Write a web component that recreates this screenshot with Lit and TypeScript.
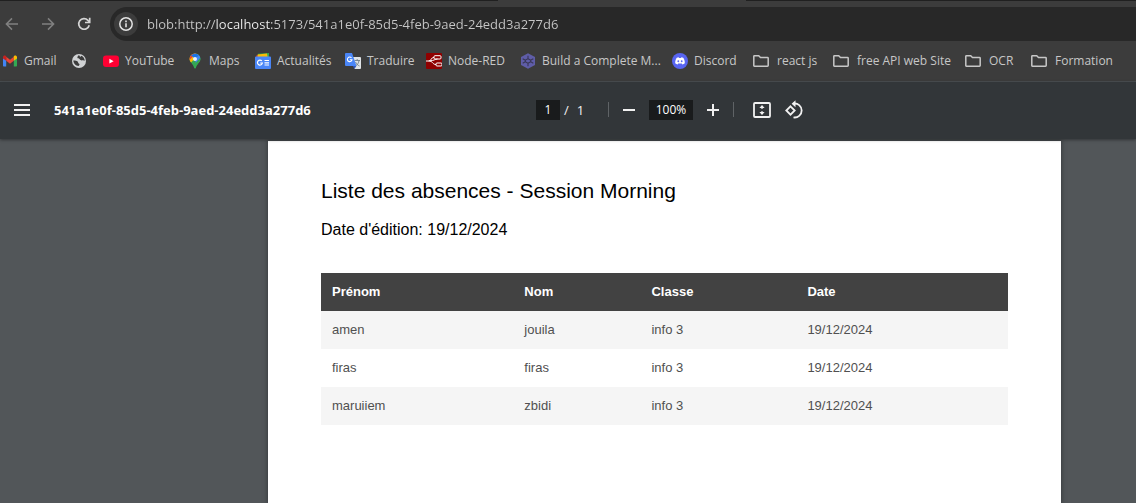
import { LitElement, html, css, TemplateResult } from "lit";
import { customElement, property } from "lit/decorators.js";

const icons: Record<string, TemplateResult> = {
  back: html`<svg width="16" height="16" viewBox="0 0 16 16" fill="none" stroke="currentColor" stroke-width="1.5"><path d="M14 8H2.6M8 2.4 2.4 8 8 13.6" /></svg>`,
  forward: html`<svg width="16" height="16" viewBox="0 0 16 16" fill="none" stroke="currentColor" stroke-width="1.5"><path d="M2 8h11.400M8 2.400 13.600 8 8 13.600" /></svg>`,
  reload: html`<svg width="16" height="16" viewBox="0 0 16 16" fill="none" stroke="currentColor" stroke-width="1.700"><path d="M13.200 9.200A5.300 5.300 0 1 1 11.900 4.300L13.500 6" /><path d="M13.700 1.800v4.700H9" /></svg>`,
  info: html`<svg width="16" height="16" viewBox="0 0 16 16"><circle cx="8" cy="8" r="6.200" fill="none" stroke="currentColor" stroke-width="1.500" /><path d="M7.200 7.200h1.600v4H7.200zM7.200 4.600h1.600v1.600H7.200z" fill="currentColor" /></svg>`,
  gmail: html`<svg width="16" height="16" viewBox="0 0 16 16"><path d="M1 4.200V12.500c0 .6.400 1 1 1h2.200V6.600z" fill="#4285f4" /><path d="M15 4.200V12.500c0 .6-.4 1-1 1h-2.200V6.600z" fill="#34a853" /><path d="M4.200 3.800 8 6.700l3.800-2.900v4L8 10.700 4.200 7.800z" fill="#ea4335" /><path d="M1 4.300c0-1.600 1.700-2.300 2.900-1.400l.3.200v4.700L1 5.400z" fill="#c5221f" /><path d="M15 4.300c0-1.600-1.700-2.300-2.900-1.400l-.3.200v4.700L15 5.400z" fill="#fbbc04" /></svg>`,
  globe: html`<svg width="16" height="16" viewBox="0 0 16 16"><circle cx="8" cy="8" r="7" fill="#d0d2d4" /><path d="M2.300 7.600c1.500 0 3.200-.1 4.300.9.900.8.200 1.600 1.300 2.100 1 .5.600 1.700-.3 2.500C4.700 12.900 2.500 10.600 2.300 7.600zM7 2.500c.2.900-.8 1.300-.6 2.200.2.800 1.600.5 2.100 1.300.6 1 1.700 1.600 2.800 1.300.9-.3 1.600-.1 2.400.5A5.700 5.700 0 0 0 10.200 2.700C10 4 8.800 4 8.500 2.400z" fill="#3c3c3c" /></svg>`,
  youtube: html`<svg width="16" height="16" viewBox="0 0 16 16"><rect y="2.500" width="16" height="11.500" rx="3" fill="#f03" /><path d="M6.400 5.800v4.800l4.200-2.400z" fill="#fff" /></svg>`,
  maps: html`<svg width="16" height="16" viewBox="0 0 16 16"><defs><clipPath id="pin"><path d="M8 .5a5.400 5.400 0 0 0-5.400 5.400c0 3 2.600 4.300 3.900 6.900.4.800.7 2.700 1.500 2.700s1.100-1.900 1.500-2.700c1.300-2.600 3.900-3.900 3.900-6.900A5.400 5.400 0 0 0 8 .5z" /></clipPath></defs><g clip-path="url(#pin)"><path d="M0 0h16v16H0z" fill="#34a853" /><path d="M0 14 13 0H0z" fill="#fbbc04" /><path d="M0 10 9 0H0z" fill="#ea4335" /><path d="M4 2.200 8 6 13.500 1 8 0z" fill="#1a73e8" /><path d="M8 6 14 0v5L9 11z" fill="#4285f4" /><path d="m14 4-9 10 4 2 6-6z" fill="#34a853" /></g><circle cx="8" cy="5.900" r="2" fill="#e8f0fe" /></svg>`,
  news: html`<svg width="16" height="16" viewBox="0 0 16 16"><path d="M1.500 2h7v5h-7z" fill="#ea4335" transform="rotate(-8 5 4)" /><path d="M3 .8 14 0v6H3z" fill="#34a853" /><path d="M2.500 1.500 12 .6 13 6H3z" fill="#fbbc04" /><path d="M0 4.500A1 1 0 0 1 1 3.500h14a1 1 0 0 1 1 1V15a1 1 0 0 1-1 1H1a1 1 0 0 1-1-1z" fill="#4a86f7" /><path d="M6.900 8A2.500 2.500 0 1 0 7.400 10H5.200M9.500 7.500H14M9.500 9.800h4.500M9.500 12H14" fill="none" stroke="#fff" stroke-width="1.200" /></svg>`,
  translate: html`<svg width="16" height="16" viewBox="0 0 16 16"><path d="M7 4h8a1 1 0 0 1 1 1v10a1 1 0 0 1-1 1H9.500z" fill="#dfe3e6" /><path d="M9.500 7.500H15M12.200 6v1.500M10.500 13c2-1.300 3.200-3 3.500-5.500M10.500 9c1 2 2.300 3.200 4 4" fill="none" stroke="#708088" stroke-width=".9" /><path d="M7.800 13h3.500l-1.800 3z" fill="#3257b5" /><path d="M1 0h6l4.500 13H1a1 1 0 0 1-1-1V1a1 1 0 0 1 1-1z" fill="#4a86f7" /><path d="M6.500 4.900A2.300 2.300 0 1 0 7 6.700H4.800" fill="none" stroke="#fff" stroke-width="1.100" /></svg>`,
  nodered: html`<svg width="16" height="16" viewBox="0 0 16 16"><rect width="16" height="16" rx="1" fill="#8f0000" /><rect x="8" y="2.700" width="7" height="3.300" rx="1" fill="none" stroke="#fff" /><rect x="10" y="10" width="6" height="3" rx="1" fill="none" stroke="#fff" /><path d="M8 4.300C5 4.300 5.500 8 2.500 8H0M2.500 8c5 0 3.500 3.500 7.500 3.500M4 7.800c4 0 5-1.800 7.500-1.800" fill="none" stroke="#fff" /></svg>`,
  hexagon: html`<svg width="16" height="16" viewBox="0 0 16 16"><path d="m8 .2 7 3.900v7.800l-7 3.900-7-3.900V4.100z" fill="#5f5da8" /><path d="M8 2.700v3L5.300 7.200 2.700 5.700M13.300 5.700 10.700 7.200 8 5.700M2.700 10.300l2.600-1.500V7.200M8 13.300v-3L5.300 8.800M13.300 10.300l-2.600-1.500V7.200M8 10.300l2.700-1.500" fill="none" stroke="#383655" stroke-width="1.100" /></svg>`,
  discord: html`<svg width="16" height="16" viewBox="0 0 16 16"><circle cx="8" cy="8" r="8" fill="#5865f2" /><path d="M5.600 4.500 6.700 4.300l.3.600h2l.3-.6 1.100.2c.7.200 1 .5 1.200.8.900 1.500 1.300 3.200 1.200 5-.7.600-1.500 1-2.400 1.200l-.6-1H6.200l-.6 1c-.9-.2-1.700-.6-2.400-1.200-.1-1.800.3-3.500 1.200-5 .2-.3.500-.6 1.200-.8z" fill="#fff" /><ellipse cx="6.300" cy="8.200" rx=".9" ry="1" fill="#5865f2" /><ellipse cx="9.700" cy="8.200" rx=".9" ry="1" fill="#5865f2" /></svg>`,
  folder: html`<svg width="20" height="16" viewBox="-1 0 20 16" fill="none" stroke="#c7c7c7" stroke-width="1.500"><path d="M1.800 3.300c0-.4.200-.6.600-.6h4.300l1.800 1.800h7c.4 0 .7.300.7.700v7.400c0 .4-.3.700-.7.700H2.400c-.4 0-.6-.3-.6-.7z" /></svg>`,
  menu: html`<svg width="16" height="12" viewBox="0 0 16 12"><path d="M0 0h16v2H0zM0 5h16v2H0zM0 10h16v2H0z" fill="currentColor" /></svg>`,
  minus: html`<svg width="12" height="12" viewBox="0 0 12 12"><path d="M0 5h12v2H0z" fill="currentColor" /></svg>`,
  plus: html`<svg width="12" height="12" viewBox="0 0 12 12"><path d="M0 5h12v2H0zM5 0h2v12H5z" fill="currentColor" /></svg>`,
  fit: html`<svg width="20" height="18" viewBox="0 0 20 18"><rect x="2" y="2" width="16" height="14" rx="1" fill="none" stroke="currentColor" stroke-width="1.800" /><path d="m10 4 2.600 3H7.400zM10 14l-2.600-3h5.200zM9.200 6.500h1.600v1.300H9.200zM9.200 10.200h1.600v1.300H9.200z" fill="currentColor" /></svg>`,
  rotate: html`<svg width="20" height="20" viewBox="0 0 20 20" fill="none" stroke="currentColor" stroke-width="1.800"><path d="m6.500 6.300 4.200 4.200-4.200 4.200-4.200-4.200z" /><path d="M9.500 3.600a7 7 0 1 1 0 13.800" /><path d="M11.500.2 7.600 3.700l3.900 3.500z" fill="currentColor" stroke="none" /></svg>`,
};

interface Bookmark {
  icon: string;
  label: string;
}

const bookmarks: Bookmark[] = [
  { icon: "gmail", label: "Gmail" },
  { icon: "globe", label: "" },
  { icon: "youtube", label: "YouTube" },
  { icon: "maps", label: "Maps" },
  { icon: "news", label: "Actualités" },
  { icon: "translate", label: "Traduire" },
  { icon: "nodered", label: "Node-RED" },
  { icon: "hexagon", label: "Build a Complete M..." },
  { icon: "discord", label: "Discord" },
  { icon: "folder", label: "react js" },
  { icon: "folder", label: "free API web Site" },
  { icon: "folder", label: "OCR" },
  { icon: "folder", label: "Formation" },
];

@customElement("browser-bar")
class BrowserBar extends LitElement {
  @property() url = "";

  static styles = css`
    :host {
      display: block;
      background: #3c3c3c;
      color: #c7c7c7;
      border-bottom: 1px solid #4a4f52;
    }
    .tabs {
      display: grid;
      grid-template-columns: 498px 248px 1fr;
      height: 1px;
    }
    .tab-rest {
      background: #202020;
    }
    .nav {
      display: flex;
      align-items: center;
      padding-top: 6px;
    }
    button {
      display: grid;
      place-items: center;
      width: 24px;
      height: 24px;
      padding: 0;
      border: 0;
      background: none;
      color: #d4d4d4;
    }
    button:disabled {
      color: #808080;
    }
    .nav-buttons {
      display: flex;
      gap: 12px;
      padding-right: 14px;
    }
    .address {
      flex: 1;
      display: flex;
      align-items: center;
      gap: 9px;
      height: 34px;
      padding-left: 4px;
      background: #282828;
      border-radius: 17px 0 0 17px;
    }
    .address button {
      border-radius: 50%;
      background: #3c3c3c;
      color: #e3e3e3;
    }
    input {
      flex: 1;
      padding: 0;
      border: 0;
      outline: 0;
      font: 13px/20px "Open Sans", sans-serif;
      color: transparent;
      background: linear-gradient(90deg, #c7c7c7 69px, #f1f1f1 69px, #f1f1f1 124px, #c7c7c7 124px);
      -webkit-background-clip: text;
      background-clip: text;
    }
    .bookmarks {
      display: grid;
      grid-template-columns: 69px 32px 84px 68px 90px 81px 94px 152px 79px 80px 132px 66px auto;
      padding: 8px 0 8px 2px;
      height: 24px;
    }
    .bookmark {
      display: flex;
      align-items: center;
      gap: 6px;
      color: inherit;
      text-decoration: none;
      white-space: nowrap;
      font: 12px/24px "Open Sans", sans-serif;
    }
    .bookmark svg {
      flex: none;
    }
  `;

  render() {
    return html`
      <div class="tabs"><div class="tab-rest"></div><div></div><div class="tab-rest"></div></div>
      <div class="nav">
        <div class="nav-buttons">
          <button disabled aria-label="Back">${icons.back}</button>
          <button disabled aria-label="Forward">${icons.forward}</button>
          <button aria-label="Reload">${icons.reload}</button>
        </div>
        <div class="address">
          <button aria-label="Site information">${icons.info}</button>
          <input aria-label="Address" spellcheck="false" .value=${this.url} />
        </div>
      </div>
      <nav class="bookmarks">
        ${bookmarks.map(
          (b) => html`<a class="bookmark" href="#" aria-label=${b.label || "Website"}>${icons[b.icon]}${b.label ? html`<span>${b.label}</span>` : ""}</a>`
        )}
      </nav>
    `;
  }
}

@customElement("pdf-toolbar")
class PdfToolbar extends LitElement {
  @property() name = "";

  static styles = css`
    :host {
      display: grid;
      grid-template-columns: 1fr auto;
      align-items: center;
      height: 55px;
      padding: 0 332px 2px 12px;
      background: #323639;
      color: #f1f1f1;
      font: 13px/20px "Open Sans", sans-serif;
      box-shadow: 0 1px 3px #0006;
      position: relative;
      z-index: 1;
    }
    .start,
    .controls {
      display: flex;
      align-items: center;
    }
    .start {
      gap: 22px;
    }
    h1 {
      margin: 0;
      font-size: 13px;
      font-weight: 700;
      color: #fff;
    }
    button {
      display: grid;
      place-items: center;
      width: 20px;
      height: 32px;
      padding: 0;
      border: 0;
      background: none;
      color: #f1f1f1;
    }
    input {
      height: 20px;
      padding: 0;
      border: 0;
      outline: 0;
      background: #191b1c;
      color: #fff;
      font: 12px/20px "Open Sans", sans-serif;
      text-align: center;
    }
    .page {
      width: 24px;
    }
    .zoom {
      width: 44px;
      margin: 0 10px;
    }
    .total {
      display: flex;
      gap: 8px;
      padding-left: 4px;
      width: 44px;
    }
    .divider {
      width: 1px;
      height: 15px;
      background: #5f6366;
    }
    .first {
      margin-right: 10px;
    }
    .last {
      margin: 0 18px 0 10px;
    }
    .rotate {
      margin-left: 12px;
    }
  `;

  render() {
    return html`
      <div class="start">
        <button aria-label="Menu">${icons.menu}</button>
        <h1>${this.name}</h1>
      </div>
      <div class="controls">
        <input class="page" aria-label="Page" .value=${"1"} />
        <div class="total"><span>/</span><span>1</span></div>
        <div class="divider first"></div>
        <button aria-label="Zoom out">${icons.minus}</button>
        <input class="zoom" aria-label="Zoom" .value=${"100%"} />
        <button aria-label="Zoom in">${icons.plus}</button>
        <div class="divider last"></div>
        <button aria-label="Fit to page">${icons.fit}</button>
        <button class="rotate" aria-label="Rotate">${icons.rotate}</button>
      </div>
    `;
  }
}

@customElement("absence-report")
class AbsenceReport extends LitElement {
  rows = [
    ["amen", "jouila", "info 3", "19/12/2024"],
    ["firas", "firas", "info 3", "19/12/2024"],
    ["maruiiem", "zbidi", "info 3", "19/12/2024"],
  ];

  static styles = css`
    :host {
      display: block;
      padding: 36px 53px;
      background: #fff;
      color: #000;
      font-family: "Liberation Sans", Arial, sans-serif;
      box-shadow: 0 0 4px 1px #3a3d40;
    }
    h2 {
      margin: 0;
      font-size: 21px;
      line-height: 28px;
      font-weight: 400;
    }
    p {
      margin: 14px 0 32px;
      font-size: 16px;
      line-height: 22px;
    }
    table {
      width: 100%;
      table-layout: fixed;
      border-collapse: collapse;
      font-size: 13px;
      line-height: 18px;
      color: #505050;
    }
    th,
    td {
      height: 38px;
      padding: 0 0 0 11px;
      text-align: left;
    }
    th {
      background: #424242;
      color: #fff;
    }
    tbody tr:nth-child(odd) {
      background: #f5f5f5;
    }
    .first-name {
      width: 28%;
    }
    .last-name {
      width: 18.5%;
    }
    .class-name {
      width: 22.7%;
    }
  `;

  render() {
    return html`
      <h2>Liste des absences - Session Morning</h2>
      <p>Date d'édition: 19/12/2024</p>
      <table>
        <colgroup>
          <col class="first-name" />
          <col class="last-name" />
          <col class="class-name" />
          <col />
        </colgroup>
        <thead>
          <tr><th>Prénom</th><th>Nom</th><th>Classe</th><th>Date</th></tr>
        </thead>
        <tbody>
          ${this.rows.map((r) => html`<tr>${r.map((c) => html`<td>${c}</td>`)}</tr>`)}
        </tbody>
      </table>
    `;
  }
}

@customElement("app-root")
class AppRoot extends LitElement {
  fileId = "541a1e0f-85d5-4feb-9aed-24edd3a277d6";

  static styles = css`
    :host {
      display: flex;
      flex-direction: column;
      min-height: 100vh;
      background: #525659;
    }
    .viewer {
      flex: 1;
      display: flex;
      flex-direction: column;
      padding: 2px 75px 0 268px;
    }
    .sheet {
      flex: 1;
    }
  `;

  render() {
    return html`
      <browser-bar .url=${`blob:http://localhost:5173/${this.fileId}`}></browser-bar>
      <pdf-toolbar .name=${this.fileId}></pdf-toolbar>
      <main class="viewer"><absence-report class="sheet"></absence-report></main>
    `;
  }
}
